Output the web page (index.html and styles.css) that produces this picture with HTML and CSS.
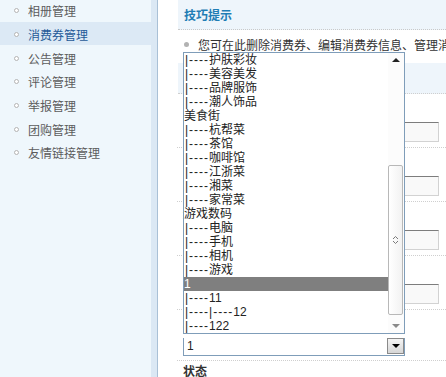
FILE: index.html
```html
<!DOCTYPE html>
<html lang="zh-CN">
<head>
<meta charset="utf-8">
<title>消费券管理</title>
<link rel="stylesheet" href="styles.css">
</head>
<body>
<div class="layout">
  <aside class="sidebar">
    <ul class="menu">
      <li class="menu-item"><span class="ring"></span>相册管理</li>
      <li class="menu-item active"><span class="ring"></span>消费券管理</li>
      <li class="menu-item"><span class="ring"></span>公告管理</li>
      <li class="menu-item"><span class="ring"></span>评论管理</li>
      <li class="menu-item"><span class="ring"></span>举报管理</li>
      <li class="menu-item"><span class="ring"></span>团购管理</li>
      <li class="menu-item"><span class="ring"></span>友情链接管理</li>
    </ul>
  </aside>
  <main class="main">
    <div class="tip-head">技巧提示</div>
    <div class="tip-line"><span class="dot"></span><span class="tip-text">您可在此删除消费券、编辑消费券信息、管理消费券状态等操作</span></div>
    <div class="form-head"></div>
    <div class="field"><div class="label">消费券名称</div><div class="input-row"><span class="input"></span></div></div>
    <div class="field"><div class="label">开始时间</div><div class="input-row"><span class="input"></span></div></div>
    <div class="field"><div class="label">结束时间</div><div class="input-row"><span class="input"></span></div></div>
    <div class="field"><div class="label">使用次数</div><div class="input-row"><span class="input"></span></div></div>
    <div class="field"><div class="label">所属分类</div><div class="select-row"><div class="select"><span class="select-value">1</span><span class="select-btn"><span class="tri-down"></span></span></div></div></div>
    <div class="field last"><div class="label">状态</div></div>
  </main>

  <div class="listbox">
    <ul class="opts">
      <li class="opt"><span class="pre">|----</span>护肤彩妆</li>
      <li class="opt"><span class="pre">|----</span>美容美发</li>
      <li class="opt"><span class="pre">|----</span>品牌服饰</li>
      <li class="opt"><span class="pre">|----</span>潮人饰品</li>
      <li class="opt cat">美食街</li>
      <li class="opt"><span class="pre">|----</span>杭帮菜</li>
      <li class="opt"><span class="pre">|----</span>茶馆</li>
      <li class="opt"><span class="pre">|----</span>咖啡馆</li>
      <li class="opt"><span class="pre">|----</span>江浙菜</li>
      <li class="opt"><span class="pre">|----</span>湘菜</li>
      <li class="opt"><span class="pre">|----</span>家常菜</li>
      <li class="opt cat">游戏数码</li>
      <li class="opt"><span class="pre">|----</span>电脑</li>
      <li class="opt"><span class="pre">|----</span>手机</li>
      <li class="opt"><span class="pre">|----</span>相机</li>
      <li class="opt"><span class="pre">|----</span>游戏</li>
      <li class="opt cat selected">1</li>
      <li class="opt"><span class="pre">|----</span>11</li>
      <li class="opt"><span class="pre">|----|----</span>12</li>
      <li class="opt"><span class="pre">|----</span>122</li>
    </ul>
    <div class="sbar">
      <div class="sbar-arrow"><span class="tri-up"></span></div>
      <div class="sbar-gap"></div>
      <div class="thumb">
        <svg class="grip" width="7" height="10" viewBox="0 0 7 10"><path d="M1 4 L3.5 1.5 L6 4 M1 6 L3.5 8.5 L6 6" fill="none" stroke="#7a7a7a" stroke-width="1"/></svg>
      </div>
      <div class="sbar-rest"></div>
      <div class="sbar-arrow"><span class="tri-down-grey"></span></div>
    </div>
  </div>
</div>
</body>
</html>
```

FILE: styles.css
```css
* { box-sizing: border-box; }
html, body { margin: 0; padding: 0; }
body {
  width: 446px;
  height: 377px;
  overflow: hidden;
  background: #fff;
  font: 12px "Noto Sans CJK SC", "Liberation Sans", sans-serif;
  color: #333;
}
ul { margin: 0; padding: 0; list-style: none; }

.layout {
  position: relative;
  display: flex;
  height: 377px;
}

/* sidebar */
.sidebar {
  width: 157px;
  flex: none;
  background: #eff7fc;
  border-right: 6px solid #dbe8f4;
  margin-right: 20px;
  box-shadow: 1px 0 0 #a9c0d6;
}
.menu { margin-top: -2px; }
.menu-item {
  height: 23.7px;
  padding-top: 2px;
  padding-left: 14px;
  display: flex;
  align-items: center;
  color: #5c5c5c;
  white-space: nowrap;
}
.menu-item.active {
  background: #dce9f5;
  color: #1f5a98;
}
.ring {
  width: 5px;
  height: 5px;
  border: 1px solid #b4b4b4;
  border-radius: 50%;
  margin-right: 9px;
  background: #fff;
}

/* main */
.main {
  flex: 1;
  min-width: 0;
}
.tip-head {
  height: 30px;
  line-height: 29px;
  margin-left: 1px;
  padding-left: 6px;
  background: #eef5fb;
  border-bottom: 1px dotted #c9c9c9;
  color: #1f7db5;
  font-weight: bold;
}
.tip-line {
  height: 33px;
  padding: 0 0 4px 7px;
  display: flex;
  align-items: center;
  white-space: nowrap;
  overflow: hidden;
}
.dot {
  flex: none;
  width: 5px;
  height: 5px;
  border-radius: 50%;
  background: #b2b2b2;
  margin-right: 9px;
}
.tip-text { color: #333; }
.form-head {
  height: 31px;
  background: #eef5fb;
  border-bottom: 1px dotted #cfcfcf;
  margin-left: 1px;
}
.field {
  border-bottom: 1px dotted #cfcfcf;
  padding-left: 6px;
}
.field.last { border-bottom: none; }
.label {
  height: 24px;
  line-height: 24px;
  font-weight: bold;
  color: #333;
}
.field.last .label { line-height: 18px; height: 18px; margin-top: 1px; }
.input-row {
  height: 29px;
  padding-top: 4px;
}
.input {
  display: block;
  width: 256px;
  height: 20px;
  background: #f9f9f9;
  border: 1px solid #d2d2d2;
  border-top-color: #7d7d7d;
  border-left-color: #7d7d7d;
}
.select-row {
  height: 26px;
  padding-top: 4px;
}
.select {
  width: 222px;
  height: 18px;
  border: 1px solid #7f9db9;
  border-top: none;
  background: #fff;
  display: flex;
  align-items: flex-start;
}
.select-value {
  flex: 1;
  padding-left: 3px;
  line-height: 17px;
  font-family: "Liberation Sans", sans-serif;
  color: #222;
}
.select-btn {
  width: 17px;
  height: 16px;
  border: 1px solid #8a8a8a;
  background: linear-gradient(#f4f4f4, #d6d6d6);
  display: flex;
  align-items: center;
  justify-content: center;
}
.tri-down {
  width: 0;
  height: 0;
  border-left: 4px solid transparent;
  border-right: 4px solid transparent;
  border-top: 4px solid #000;
}

/* open dropdown list */
.listbox {
  position: absolute;
  left: 183px;
  top: 52px;
  width: 222px;
  height: 282px;
  border: 1px solid #7f9db9;
  background: #fff;
  display: flex;
}
.opts {
  flex: 1;
  min-width: 0;
}
.opt {
  height: 14px;
  line-height: 14px;
  padding-left: 1px;
  white-space: nowrap;
  font-family: "Liberation Sans", "Noto Sans CJK SC", sans-serif;
  color: #222;
}
.pre { letter-spacing: 1px; }
.opt.cat { padding-left: 0; }
.opt.selected {
  background: #7f7f7f;
  color: #fff;
}
.sbar {
  width: 16px;
  flex: none;
  display: flex;
  flex-direction: column;
  background: #fcfcfc;
}
.sbar-arrow {
  height: 14px;
  display: flex;
  align-items: center;
  justify-content: center;
}
.tri-up {
  width: 0;
  height: 0;
  border-left: 4px solid transparent;
  border-right: 4px solid transparent;
  border-bottom: 4px solid #222;
}
.tri-down-grey {
  width: 0;
  height: 0;
  border-left: 4px solid transparent;
  border-right: 4px solid transparent;
  border-top: 4px solid #8a8a8a;
}
.sbar-gap { height: 98px; }
.thumb {
  width: 15px;
  height: 150px;
  border: 1px solid #b8b8b8;
  border-radius: 2px;
  background: linear-gradient(90deg, #ffffff, #f2f2f2);
  display: flex;
  align-items: center;
  justify-content: center;
}
.sbar-rest { flex: 1; }
```
